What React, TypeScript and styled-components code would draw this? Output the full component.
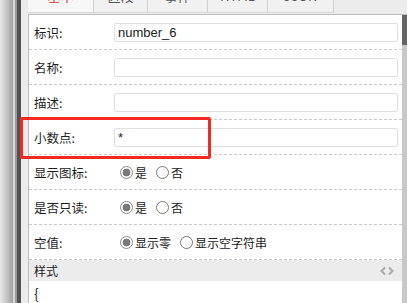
import { createGlobalStyle, styled } from 'styled-components'

const GlobalStyle = createGlobalStyle`
  html, body {
    margin: 0;
    padding: 0;
    overflow: hidden;
    background: #fff;
    font-family: "Noto Sans CJK SC", "Liberation Sans", sans-serif;
  }
`

const Page = styled.div`
  position: relative;
  display: flex;
  width: 407px;
  height: 303px;
  overflow: hidden;
`

const EdgeGradient = styled.div`
  width: 13px;
  background: linear-gradient(to right, #e8e8e8, #a2a2a2);
`

const EdgeStrip = styled.div<{ $w: number; $color: string }>`
  width: ${(p) => p.$w}px;
  background: ${(p) => p.$color};
`

const Main = styled.div`
  flex: 1;
  display: flex;
  flex-direction: column;
  background: #ececec;
  padding-left: 7px;
  min-width: 0;
`

const TabStrip = styled.div`
  display: flex;
  height: 28px;
  margin-top: -14px;
  flex-shrink: 0;
`

const Tab = styled.div<{ $w: number; $active?: boolean }>`
  width: ${(p) => p.$w}px;
  height: 27px;
  box-sizing: border-box;
  border-right: 1px solid #cfcfcf;
  border-bottom: 1px solid #d6d6d6;
  background: ${(p) => (p.$active ? '#f7f7f7' : '#f1f1f1')};
  color: ${(p) => (p.$active ? '#d2342c' : '#555')};
  font-size: 13px;
  line-height: 18px;
  padding-top: 1px;
  text-align: center;
`

const Panel = styled.div`
  flex: 1;
  display: flex;
  background: #fff;
  border-top: 1px solid #bdbdbd;
  border-left: 1px solid #bdbdbd;
`

const Content = styled.div`
  flex: 1;
  min-width: 0;
`

const Scrollbar = styled.div`
  width: 5px;
  background: #c8c8c8;
`

const Thumb = styled.div`
  height: 30px;
  background: #666;
`

const Row = styled.div`
  display: flex;
  align-items: center;
  height: 34px;
  padding: 0 4px 0 5px;
  border-bottom: 1px dashed #cacaca;
`

const Label = styled.div`
  width: 80px;
  flex-shrink: 0;
  font-size: 12.5px;
  color: #1e1e1e;
`

const TextInput = styled.input`
  flex: 1;
  min-width: 0;
  height: 19px;
  box-sizing: border-box;
  border: 1px solid #e0e0e0;
  border-radius: 2px;
  padding: 0 3px;
  font-family: "Liberation Sans", "Noto Sans CJK SC", sans-serif;
  font-size: 13px;
  color: #222;
  outline: none;
`

const RadioGroup = styled.div`
  display: flex;
  align-items: center;
  padding-left: 6px;
`

const RadioOption = styled.label`
  display: flex;
  align-items: center;
  gap: 2px;
  margin-right: 9px;
  font-size: 12px;
  color: #222;
`

const RadioCircle = styled.span<{ $checked?: boolean }>`
  width: 13px;
  height: 13px;
  box-sizing: border-box;
  border-radius: 50%;
  border: 1px solid ${(p) => (p.$checked ? '#8a8a8a' : '#777')};
  background: ${(p) =>
    p.$checked ? 'radial-gradient(circle, #7a7a7a 0 3.6px, #fff 4.2px)' : '#fff'};
`

const SectionHeader = styled.div`
  display: flex;
  align-items: center;
  justify-content: space-between;
  height: 21px;
  padding: 0 8px 0 5px;
  background: #ececec;
  font-size: 12px;
  color: #222;
`

const CodeLine = styled.div`
  padding: 2px 5px 0;
  font-size: 14px;
  line-height: 20px;
  color: #222;
`

const Highlight = styled.div`
  position: absolute;
  left: 20px;
  top: 117px;
  width: 191px;
  height: 42px;
  box-sizing: border-box;
  border: 3px solid #f42a22;
  border-radius: 2px;
  pointer-events: none;
`

const tabs = [
  { name: '基本', w: 66, active: true },
  { name: '区段', w: 54 },
  { name: '事件', w: 60 },
  { name: 'HTML', w: 60 },
  { name: 'JSON', w: 66 },
]

function Radios({ options, checked }: { options: string[]; checked: number }) {
  return (
    <RadioGroup>
      {options.map((o, i) => (
        <RadioOption key={o}>
          <RadioCircle $checked={i === checked} />
          {o}
        </RadioOption>
      ))}
    </RadioGroup>
  )
}

export default function App() {
  return (
    <>
      <GlobalStyle />
      <Page>
        <EdgeGradient />
        <EdgeStrip $w={2} $color="#d9d9d9" />
        <EdgeStrip $w={2} $color="#9a9a9a" />
        <EdgeStrip $w={4} $color="#525252" />
        <Main>
          <TabStrip>
            {tabs.map((t) => (
              <Tab key={t.name} $w={t.w} $active={t.active}>
                {t.name}
              </Tab>
            ))}
          </TabStrip>
          <Panel>
            <Content>
              <Row>
                <Label>标识:</Label>
                <TextInput readOnly value="number_6" />
              </Row>
              <Row>
                <Label>名称:</Label>
                <TextInput readOnly value="" />
              </Row>
              <Row>
                <Label>描述:</Label>
                <TextInput readOnly value="" />
              </Row>
              <Row>
                <Label>小数点:</Label>
                <TextInput readOnly value="*" />
              </Row>
              <Row>
                <Label>显示图标:</Label>
                <Radios options={['是', '否']} checked={0} />
              </Row>
              <Row>
                <Label>是否只读:</Label>
                <Radios options={['是', '否']} checked={0} />
              </Row>
              <Row>
                <Label>空值:</Label>
                <Radios options={['显示零', '显示空字符串']} checked={0} />
              </Row>
              <SectionHeader>
                样式
                <svg width="14" height="10" viewBox="0 0 14 10">
                  <path d="M5 1.5 L1.5 5 L5 8.5 M9 1.5 L12.5 5 L9 8.5" fill="none" stroke="#a8a8a8" strokeWidth="2" />
                </svg>
              </SectionHeader>
              <CodeLine>{'{'}</CodeLine>
            </Content>
            <Scrollbar>
              <Thumb />
            </Scrollbar>
          </Panel>
        </Main>
        <Highlight />
      </Page>
    </>
  )
}
